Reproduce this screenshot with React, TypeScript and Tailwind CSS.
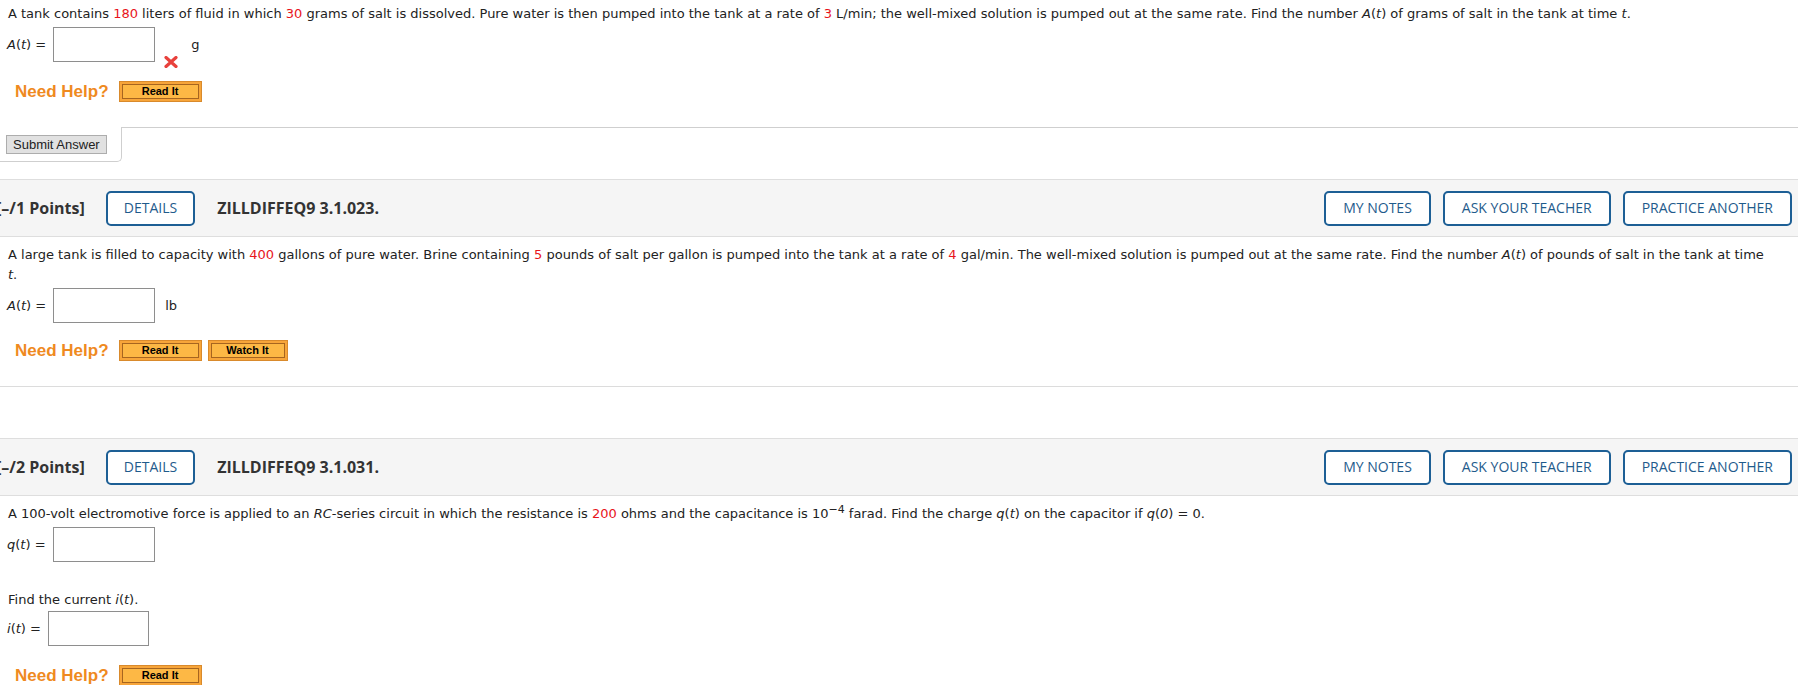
import React from 'react';

const bodyText = "font-['DejaVu_Sans',Verdana,sans-serif] text-[13px] leading-[20px] text-[#222]";

function Red({ children }: { children: React.ReactNode }) {
  return <span className="text-[#e8141b]">{children}</span>;
}

function Fn({ name, arg = 't' }: { name: string; arg?: string }) {
  return (
    <span>
      <i>{name}</i>(<i>{arg}</i>)
    </span>
  );
}

function AnswerBox({ width = 'w-[102px]' }: { width?: string }) {
  return <input className={`${width} h-[35px] border border-[#8e8e8e] bg-white outline-none`} />;
}

function HelpButton({ label, width }: { label: string; width: string }) {
  return (
    <button className={`${width} h-[21px] border border-[#d98a2c] bg-[#f7a53a] p-[2px]`}>
      <span className="flex h-full items-center justify-center border border-[#a7651f] bg-[#fdb845] font-['Liberation_Sans',Arial,sans-serif] text-[11px] font-bold leading-none text-black">
        {label}
      </span>
    </button>
  );
}

function NeedHelp({ watch = false, gap = 'mt-[19px]' }: { watch?: boolean; gap?: string }) {
  return (
    <div className={`${gap} flex items-center pl-[15px]`}>
      <span className="font-['Liberation_Sans',Arial,sans-serif] text-[17px] font-bold leading-[21px] text-[#ef8a1f]">
        Need Help?
      </span>
      <div className="ml-[10px] flex gap-[6px]">
        <HelpButton label="Read It" width="w-[83px]" />
        {watch && <HelpButton label="Watch It" width="w-[80px]" />}
      </div>
    </div>
  );
}

function OutlineButton({ children, pad = 'px-[17px]' }: { children: React.ReactNode; pad?: string }) {
  return (
    <button
      className={`flex h-[35px] items-center rounded-[5px] border-2 border-[#1d5f95] bg-white ${pad} font-['Open_Sans',sans-serif] text-[14px] uppercase text-[#1f5b8c]`}
    >
      {children}
    </button>
  );
}

function QuestionHeader({ points, code }: { points: string; code: string }) {
  return (
    <div className="flex h-[58px] items-center border-y border-[#dedede] bg-[#f5f5f5] pr-[6px]">
      <span className="-ml-[4px] whitespace-nowrap font-['Open_Sans',sans-serif] text-[16px] font-bold text-[#333]">
        {points}
      </span>
      <div className="ml-[21px]">
        <OutlineButton pad="px-[16px]">Details</OutlineButton>
      </div>
      <span className="ml-[22px] font-['Open_Sans',sans-serif] text-[16px] font-bold text-[#333]">{code}</span>
      <div className="ml-auto flex gap-3">
        <OutlineButton>My Notes</OutlineButton>
        <OutlineButton>Ask Your Teacher</OutlineButton>
        <OutlineButton>Practice Another</OutlineButton>
      </div>
    </div>
  );
}

function WrongMark() {
  return (
    <svg width="14" height="12" viewBox="0 0 14 12" className="relative top-[17px] ml-[9px]">
      <path d="M2 1.5 L12 10.5 M12 1.5 L2 10.5" stroke="#e8413c" strokeWidth="3.2" strokeLinecap="round" />
    </svg>
  );
}

export default function App() {
  return (
    <div className={`min-h-screen overflow-hidden bg-white ${bodyText}`}>
      {/* question 1 (tail) */}
      <div className="pt-[4px]">
        <p className="whitespace-nowrap pl-[8px]">
          A tank contains <Red>180</Red> liters of fluid in which <Red>30</Red> grams of salt is dissolved. Pure water is
          then pumped into the tank at a rate of <Red>3</Red> L/min; the well-mixed solution is pumped out at the same
          rate. Find the number <Fn name="A" /> of grams of salt in the tank at time <i>t</i>.
        </p>
        <div className="mt-[3px] flex items-center pl-[7px]">
          <span>
            <Fn name="A" /> =
          </span>
          <span className="ml-[7px]">
            <AnswerBox />
          </span>
          <WrongMark />
          <span className="ml-[13px]">g</span>
        </div>
        <NeedHelp />
        <div className="mt-[25px] flex h-[35px]">
          <div className="flex w-[122px] items-center rounded-br-[5px] border-r border-b border-[#cfcfcf] pl-[6px]">
            <button className="h-[19px] border border-[#adadad] bg-[#e1e1e1] px-[6px] font-['Liberation_Sans',Arial,sans-serif] text-[13px] leading-none text-[#222]">
              Submit Answer
            </button>
          </div>
          <div className="flex-1 border-t border-[#cfcfcf]" />
        </div>
      </div>

      {/* question 2 */}
      <div className="mt-[17px]">
        <QuestionHeader points="[–/1 Points]" code="ZILLDIFFEQ9 3.1.023." />
        <div className="pt-[8px]">
          <p className="pl-[8px]">
            <span className="whitespace-nowrap">
              A large tank is filled to capacity with <Red>400</Red> gallons of pure water. Brine containing <Red>5</Red>{' '}
              pounds of salt per gallon is pumped into the tank at a rate of <Red>4</Red> gal/min. The well-mixed
              solution is pumped out at the same rate. Find the number <Fn name="A" /> of pounds of salt in the tank at
              time
            </span>
            <br />
            <i>t</i>.
          </p>
          <div className="mt-[3px] flex items-center pl-[7px]">
            <span>
              <Fn name="A" /> =
            </span>
            <span className="ml-[7px]">
              <AnswerBox />
            </span>
            <span className="ml-[10px]">lb</span>
          </div>
          <NeedHelp watch gap="mt-[17px]" />
          <div className="mt-[25px] h-[35px] border-t border-[#dcdcdc]" />
        </div>
      </div>

      {/* question 3 */}
      <div className="mt-[17px]">
        <QuestionHeader points="[–/2 Points]" code="ZILLDIFFEQ9 3.1.031." />
        <div className="pt-[8px]">
          <p className="whitespace-nowrap pl-[8px]">
            A 100-volt electromotive force is applied to an <i>RC</i>-series circuit in which the resistance is{' '}
            <Red>200</Red> ohms and the capacitance is 10<sup className="text-[11px]">−4</sup> farad. Find the charge{' '}
            <Fn name="q" /> on the capacitor if <Fn name="q" arg="0" /> = 0.
          </p>
          <div className="mt-[3px] flex items-center pl-[7px]">
            <span>
              <Fn name="q" /> =
            </span>
            <span className="ml-[7px]">
              <AnswerBox />
            </span>
          </div>
          <p className="mt-[28px] pl-[8px]">
            Find the current <Fn name="i" />.
          </p>
          <div className="mt-[1px] flex items-center pl-[7px]">
            <span>
              <Fn name="i" /> =
            </span>
            <span className="ml-[7px]">
              <AnswerBox width="w-[101px]" />
            </span>
          </div>
          <NeedHelp />
        </div>
      </div>
    </div>
  );
}
